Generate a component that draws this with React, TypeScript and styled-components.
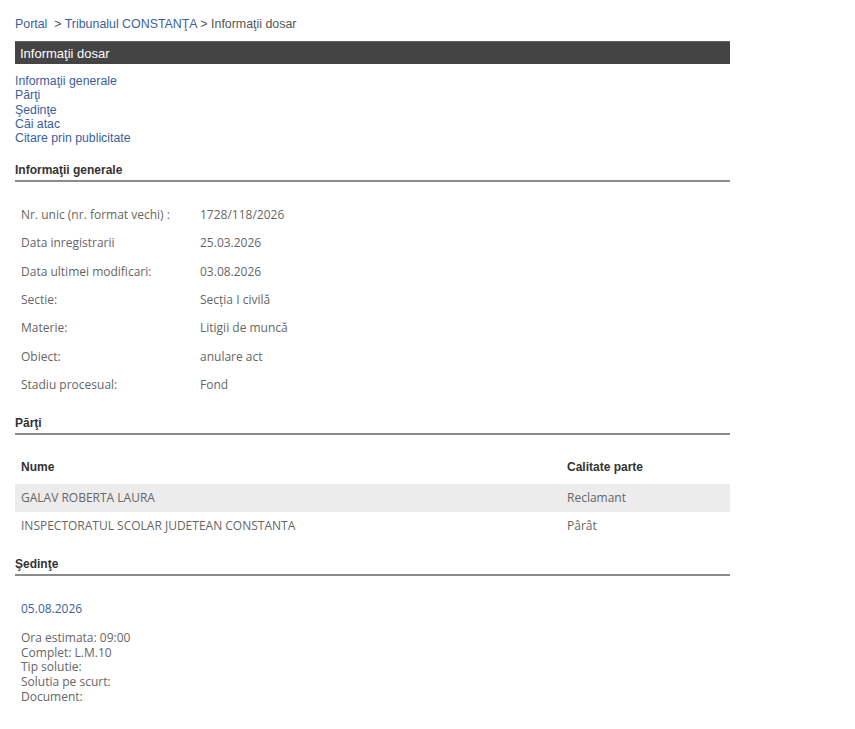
import styled, { createGlobalStyle } from "styled-components";

const GlobalStyle = createGlobalStyle`
  body {
    margin: 0;
    background: #fff;
    font-family: "Liberation Sans", Arial, sans-serif;
  }
`;

const generalInfo = [
  { label: "Nr. unic (nr. format vechi) :", value: "1728/118/2026" },
  { label: "Data inregistrarii", value: "25.03.2026" },
  { label: "Data ultimei modificari:", value: "03.08.2026" },
  { label: "Sectie:", value: "Secția I civilă" },
  { label: "Materie:", value: "Litigii de muncă" },
  { label: "Obiect:", value: "anulare act" },
  { label: "Stadiu procesual:", value: "Fond" },
];

const parties = [
  { name: "GALAV ROBERTA LAURA", role: "Reclamant" },
  { name: "INSPECTORATUL SCOLAR JUDETEAN CONSTANTA", role: "Pârât" },
];

const hearingDetails = [
  "Ora estimata: 09:00",
  "Complet: L.M.10",
  "Tip solutie:",
  "Solutia pe scurt:",
  "Document:",
];

export default function App() {
  return (
    <>
      <GlobalStyle />
      <Page>
        <Breadcrumb>
          <CrumbLink href="#">Portal</CrumbLink>
          {"  > "}
          <CrumbLink href="#">Tribunalul CONSTANŢA</CrumbLink>
          {" > Informaţii dosar"}
        </Breadcrumb>

        <TitleBar>Informaţii dosar</TitleBar>

        <AnchorList>
          <AnchorLink href="#">Informaţii generale</AnchorLink>
          <AnchorLink href="#">Părţi</AnchorLink>
          <AnchorLink href="#">Şedinţe</AnchorLink>
          <AnchorLink href="#">Căi atac</AnchorLink>
          <AnchorLink href="#">Citare prin publicitate</AnchorLink>
        </AnchorList>

        <SectionTitle>Informaţii generale</SectionTitle>
        <InfoTable>
          <tbody>
            {generalInfo.map((row) => (
              <InfoRow key={row.label}>
                <InfoLabel>{row.label}</InfoLabel>
                <InfoValue>{row.value}</InfoValue>
              </InfoRow>
            ))}
          </tbody>
        </InfoTable>

        <SectionTitle>Părţi</SectionTitle>
        <PartyTable>
          <thead>
            <tr>
              <HeadCell $wide>Nume</HeadCell>
              <HeadCell>Calitate parte</HeadCell>
            </tr>
          </thead>
          <tbody>
            {parties.map((p, i) => (
              <PartyRow key={p.name} $striped={i % 2 === 0}>
                <PartyCell>{p.name}</PartyCell>
                <PartyCell>{p.role}</PartyCell>
              </PartyRow>
            ))}
          </tbody>
        </PartyTable>

        <SectionTitle>Şedinţe</SectionTitle>
        <Hearing>
          <HearingDate>05.08.2026</HearingDate>
          <HearingLines>
            {hearingDetails.map((line) => (
              <div key={line}>{line}</div>
            ))}
          </HearingLines>
        </Hearing>
      </Page>
    </>
  );
}

const Page = styled.div`
  width: 715px;
  padding: 17px 15px 30px;
`;

const Breadcrumb = styled.div`
  font-size: 12.4px;
  line-height: 15px;
  color: #555;
  white-space: pre;
`;

const CrumbLink = styled.a`
  color: #3a5f9f;
  text-decoration: none;
`;

const TitleBar = styled.div`
  margin-top: 9px;
  height: 23px;
  line-height: 23px;
  padding-left: 5px;
  background: #444;
  border-top: 1px solid #666;
  box-sizing: border-box;
  color: #fff;
  font-size: 13px;
`;

const AnchorList = styled.div`
  margin-top: 10px;
  padding-bottom: 1px;
  display: flex;
  flex-direction: column;
`;

const AnchorLink = styled.a`
  font-size: 12.3px;
  line-height: 14.3px;
  color: #3a5f9f;
  text-decoration: none;
`;

const SectionTitle = styled.div`
  margin-top: 17px;
  padding-bottom: 3px;
  border-bottom: 2px solid #8a8a8a;
  font-size: 12px;
  line-height: 14px;
  font-weight: bold;
  color: #333;
`;

const InfoTable = styled.table`
  margin-top: 18px;
  border-collapse: collapse;
  font-family: "Open Sans", sans-serif;
  font-size: 12px;
  color: #666;
`;

const InfoRow = styled.tr`
  height: 28.33px;
`;

const InfoLabel = styled.td`
  width: 179px;
  padding: 0 0 0 6px;
  vertical-align: middle;
`;

const InfoValue = styled.td`
  padding: 0;
  vertical-align: middle;
`;

const PartyTable = styled.table`
  width: 100%;
  margin-top: 18px;
  border-collapse: collapse;
  font-family: "Open Sans", sans-serif;
  font-size: 12px;
`;

const HeadCell = styled.th<{ $wide?: boolean }>`
  width: ${(p) => (p.$wide ? "534px" : "auto")};
  padding: 7px 6px 10px;
  text-align: left;
  font-family: "Liberation Sans", Arial, sans-serif;
  font-size: 12px;
  line-height: 14px;
  font-weight: bold;
  color: #333;
`;

const PartyRow = styled.tr<{ $striped: boolean }>`
  height: 28px;
  background: ${(p) => (p.$striped ? "#ececec" : "transparent")};
`;

const PartyCell = styled.td`
  padding: 0 6px;
  color: #666;
  vertical-align: middle;
`;

const Hearing = styled.div`
  padding-left: 6px;
  font-family: "Open Sans", sans-serif;
  font-size: 12px;
`;

const HearingDate = styled.div`
  margin-top: 25px;
  line-height: 16px;
  color: #3a5f9f;
`;

const HearingLines = styled.div`
  margin-top: 14px;
  line-height: 14.75px;
  color: #666;
`;
